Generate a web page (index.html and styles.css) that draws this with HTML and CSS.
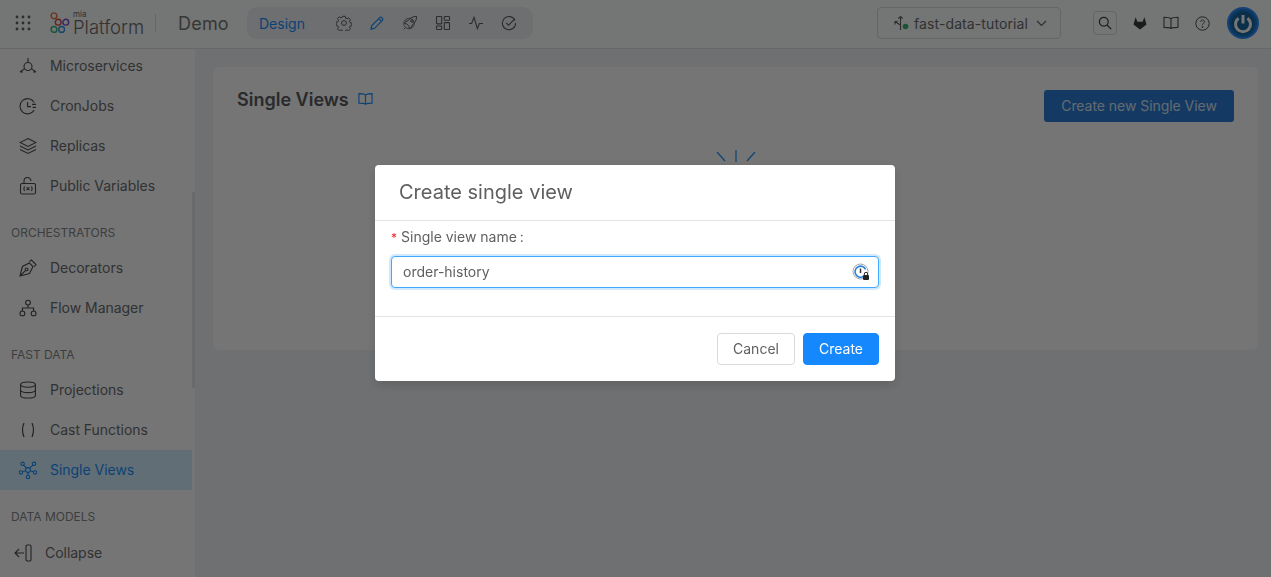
FILE: index.html
```html
<!DOCTYPE html>
<html lang="en">
<head>
    <meta charset="UTF-8">
    <title>Single Views</title>
    <link rel="stylesheet" href="styles.css">
</head>
<body>
    <header class="topbar">
        <svg class="apps" width="16" height="16" viewBox="0 0 16 16" fill="#5f6266">
            <circle cx="2" cy="2" r="1.4"/><circle cx="8" cy="2" r="1.4"/><circle cx="14" cy="2" r="1.4"/>
            <circle cx="2" cy="8" r="1.4"/><circle cx="8" cy="8" r="1.4"/><circle cx="14" cy="8" r="1.4"/>
            <circle cx="2" cy="14" r="1.4"/><circle cx="8" cy="14" r="1.4"/><circle cx="14" cy="14" r="1.4"/>
        </svg>
        <div class="logo">
            <svg width="20" height="22" viewBox="0 0 20 22" fill="none" stroke-width="1.4">
                <circle cx="4" cy="3.8" r="2.9" stroke="#e8743c"/>
                <circle cx="8.2" cy="10.2" r="2.9" stroke="#d84a4a"/>
                <circle cx="15.8" cy="10.2" r="2.9" stroke="#7c50d0"/>
                <circle cx="4" cy="17.4" r="2.9" stroke="#38b874"/>
                <circle cx="11.6" cy="17.4" r="2.9" stroke="#3098ea"/>
            </svg>
            <div class="logo-text"><span class="logo-mia">mia</span><span class="logo-name">Platform</span></div>
        </div>
        <span class="topbar-sep"></span>
        <span class="project">Demo</span>
        <nav class="modes">
            <span class="mode-label">Design</span>
            <span class="modes-sep"></span>
            <svg class="mode-icon" viewBox="0 0 16 16" fill="none" stroke="#5f6266" stroke-width="1"><path d="M6.7 1.3h2.6l.4 1.9 1.3.6 1.7-1 1.8 1.9-1 1.6.5 1.4 1.8.4v2.6l-1.8.4-.5 1.3 1 1.6-1.8 1.8-1.7-1-1.3.6-.4 1.8H6.700l-.4-1.800-1.300-.6-1.700 1-1.800-1.800 1-1.600-.5-1.300-1.800-.4V7.100l1.800-.4.5-1.400-1-1.600 1.800-1.900 1.700 1 1.300-.6z"/><circle cx="8" cy="8" r="2.400"/></svg>
            <svg class="mode-icon" viewBox="0 0 16 16" fill="none" stroke="#1890ff" stroke-width="1.2"><path d="M2 14.200l.8-3.600 8-8c.6-.6 1.500-.6 2 0l.7.7c.5.6.5 1.400 0 2l-8 8z"/><path d="M9.800 3.600l2.700 2.700"/></svg>
            <svg class="mode-icon" viewBox="0 0 16 16" fill="none" stroke="#5f6266" stroke-width="1"><path d="M14.600 1.400c-3.600 0-6.400 1.400-8.400 4.200L3.800 6.400l-1.400 2 2.400.6 2.200 2.200.6 2.400 2-1.400.8-2.400c2.800-2 4.200-4.800 4.200-8.400z"/><circle cx="10" cy="6" r="1.300"/><circle cx="7" cy="8.500" r="5.200" stroke-width=".8"/><path d="M1.600 14.400l1.600-1.600"/></svg>
            <svg class="mode-icon" viewBox="0 0 16 16" fill="none" stroke="#5f6266" stroke-width="1.100"><rect x="1.500" y="1.500" width="5.200" height="7.400" rx=".6"/><rect x="9.300" y="1.500" width="5.200" height="3.800" rx=".6"/><rect x="1.500" y="11" width="5.200" height="3.500" rx=".6"/><rect x="9.300" y="7.600" width="5.200" height="6.900" rx=".6"/></svg>
            <svg class="mode-icon" viewBox="0 0 16 16" fill="none" stroke="#5f6266" stroke-width="1.100"><path d="M1 8.500h2.600L6 2.500l3.400 11 2-5h3.600"/></svg>
            <svg class="mode-icon" viewBox="0 0 16 16" fill="none" stroke="#5f6266" stroke-width="1.100"><path d="M14 5.400A6.600 6.600 0 1 0 14.600 8"/><path d="M5.200 7.800l2.400 2.400 6.200-6.400"/></svg>
        </nav>
        <div class="branch">
            <svg width="16" height="16" viewBox="0 0 16 16" fill="none" stroke="#5f6266" stroke-width="1.100"><path d="M7.500 15V1.500M7.500 1.500L5.300 3.700M7.500 1.500l2.200 2.200M7.500 10L1.800 6.500M1.800 6.500l.2 3M1.800 6.500l3-.3"/><circle cx="12.500" cy="11.500" r="2.800" fill="#38b874" stroke="none"/></svg>
            <span class="branch-name">fast-data-tutorial</span>
            <svg width="11" height="7" viewBox="0 0 11 7" fill="none" stroke="#5f6266" stroke-width="1.100"><path d="M1 1l4.500 4.500L10 1"/></svg>
        </div>
        <div class="tools">
            <span class="search-box">
                <svg width="14" height="14" viewBox="0 0 14 14" fill="none" stroke="#3d3f42" stroke-width="1.200"><circle cx="5.800" cy="5.800" r="4.400"/><path d="M9 9l4.200 4.200"/></svg>
            </span>
            <svg class="tool" width="14" height="14" viewBox="0 0 14 14" fill="#3a3b3d"><path d="M7 13.400L.5 8.600 1 6.800 2.600 1.200l1.800 4.600h5.200l1.800-4.600L13 6.800l.5 1.800z"/></svg>
            <svg class="tool" width="16" height="14" viewBox="0 0 16 14" fill="none" stroke="#4f5154" stroke-width="1.100"><path d="M8 2.600C6.600 1.600 4 1.200 1 1.200v10.200c3 0 5.600.200 7 1.200 1.400-1 4-1.200 7-1.200V1.200c-3 0-5.600.400-7 1.400zM8 2.600v10"/></svg>
            <svg class="tool" width="15" height="15" viewBox="0 0 15 15" fill="none" stroke="#4f5154" stroke-width="1"><circle cx="7.500" cy="7.500" r="6.700"/><path d="M5.600 5.800c0-1.100.9-1.800 1.900-1.800s1.900.7 1.900 1.700c0 1.500-1.900 1.500-1.900 3"/><circle cx="7.500" cy="10.900" r=".5" fill="#4f5154"/></svg>
            <span class="avatar">
                <svg width="32" height="32" viewBox="0 0 32 32" fill="none"><circle cx="16" cy="16" r="15" fill="#1a78c8" stroke="#2f8fff" stroke-width="2"/><circle cx="16" cy="16" r="11.500" fill="#14669f"/><path d="M11.600 11.200a7.500 7.500 0 1 0 8.800 0" stroke="#fff" stroke-width="3"/><path d="M16 8v8.500" stroke="#fff" stroke-width="3"/></svg>
            </span>
        </div>
    </header>

    <div class="content">
        <aside class="sidebar">
            <div class="side-list">
                <div class="side-item">
                    <svg class="side-icon" viewBox="0 0 18 18" fill="none" stroke="#4a4c4f" stroke-width="1.100"><circle cx="9" cy="9.500" r="4"/><path d="M9 1v4.500M5.600 11.600L1 15M12.400 11.600L17 15M1 15h3M14 15h3"/></svg>
                    <span>Microservices</span>
                </div>
                <div class="side-item">
                    <svg class="side-icon" viewBox="0 0 18 18" fill="none" stroke="#4a4c4f" stroke-width="1.100"><path d="M15.200 5.500A7.600 7.600 0 1 0 15.200 13"/><path d="M8.600 5v4.600h3.400M13 7.400h4M13.600 10.400H17"/></svg>
                    <span>CronJobs</span>
                </div>
                <div class="side-item">
                    <svg class="side-icon" viewBox="0 0 18 18" fill="none" stroke="#4a4c4f" stroke-width="1.100"><path d="M9 1.500l8 4-8 4-8-4zM1 9l8 4 8-4M1 12.500l8 4 8-4"/></svg>
                    <span>Replicas</span>
                </div>
                <div class="side-item">
                    <svg class="side-icon" viewBox="0 0 18 18" fill="none" stroke="#4a4c4f" stroke-width="1.100"><rect x="1.500" y="6.500" width="15" height="10.500" rx="1.600"/><path d="M5 6.500V4a3.500 3.500 0 0 1 7 0M5.600 9.500c-.9 1.400-.9 3 0 4.500M12.400 9.500c.9 1.400.9 3 0 4.500M7.600 10.400l2.800 2.800M10.400 10.400l-2.800 2.800"/></svg>
                    <span>Public Variables</span>
                </div>
                <div class="side-title">Orchestrators</div>
                <div class="side-item">
                    <svg class="side-icon" viewBox="0 0 18 18" fill="none" stroke="#4a4c4f" stroke-width="1.100"><path d="M1 17l2.400-9.500 7-3.500 3.600 3.600-3.500 7zM1 17l5.400-5.400M10.400 2.600L12.400 1 17 5.600 15.400 7.600"/><circle cx="7.600" cy="10.400" r="1.400"/></svg>
                    <span>Decorators</span>
                </div>
                <div class="side-item">
                    <svg class="side-icon" viewBox="0 0 18 18" fill="none" stroke="#4a4c4f" stroke-width="1.100"><circle cx="9" cy="3.600" r="2.400"/><circle cx="3.400" cy="14.400" r="2.400"/><circle cx="14.600" cy="14.400" r="2.400"/><path d="M9 6v3M3.400 12V9h11.200v3"/></svg>
                    <span>Flow Manager</span>
                </div>
                <div class="side-title">Fast Data</div>
                <div class="side-item">
                    <svg class="side-icon" viewBox="0 0 18 18" fill="none" stroke="#4a4c4f" stroke-width="1.100"><ellipse cx="9" cy="3.600" rx="7.400" ry="2.600"/><path d="M1.600 3.600v10.800c0 1.400 3.300 2.600 7.400 2.600s7.400-1.200 7.400-2.600V3.600M1.600 9c0 1.400 3.300 2.600 7.400 2.600s7.400-1.200 7.400-2.600"/></svg>
                    <span>Projections</span>
                </div>
                <div class="side-item">
                    <svg class="side-icon" viewBox="0 0 18 18" fill="none" stroke="#4a4c4f" stroke-width="1.200"><path d="M5 2c-1.800 4.200-1.800 9.800 0 14M13 2c1.800 4.200 1.800 9.800 0 14"/></svg>
                    <span>Cast Functions</span>
                </div>
                <div class="side-item side-item-active">
                    <svg class="side-icon" viewBox="0 0 18 18" fill="none" stroke="#1890ff" stroke-width="1.100"><circle cx="9" cy="9" r="2.400"/><circle cx="3.600" cy="2.800" r="1.700"/><circle cx="15" cy="2.800" r="1.700"/><circle cx="1.900" cy="11.400" r="1.700"/><circle cx="16.100" cy="11.400" r="1.700"/><circle cx="9" cy="16" r="1.700"/><path d="M4.700 4.100l2.700 3.100M13.900 4.100l-3.300 3.100M3.500 10.800l3.200-1M14.500 10.800l-3.200-1M9 11.400v2.900"/></svg>
                    <span>Single Views</span>
                </div>
                <div class="side-title">Data Models</div>
            </div>
            <div class="collapse">
                <svg class="collapse-icon" viewBox="0 0 18 18" fill="none" stroke="#4a4c4f" stroke-width="1.100"><path d="M1 9h9M5 5L1 9l4 4"/><rect x="12" y="1" width="5" height="16" rx="1.200"/></svg>
                <span>Collapse</span>
            </div>
            <span class="side-thumb"></span>
        </aside>

        <main class="main">
            <section class="card">
                <div class="card-head">
                    <h1 class="card-title">Single Views</h1>
                    <svg class="card-book" width="15" height="14" viewBox="0 0 16 14" fill="none" stroke="#1890ff" stroke-width="1.200"><path d="M8 2.600C6.600 1.600 4 1.200 1 1.200v10.200c3 0 5.600.200 7 1.200 1.400-1 4-1.200 7-1.200V1.200c-3 0-5.600.400-7 1.400zM8 2.600v10"/></svg>
                    <button type="button" class="btn-new">Create new Single View</button>
                </div>
                <svg class="rays" width="40" height="16" viewBox="0 0 40 16" fill="none" stroke="#1890ff" stroke-width="1.200"><path d="M20 0v12M1 2l8 9M39 2l-8 9"/></svg>
            </section>
        </main>
    </div>

    <div class="mask">
        <div class="modal">
            <div class="modal-title">Create single view</div>
            <div class="modal-body">
                <label class="field-label" for="viewName"><span class="required">*</span>Single view name<span class="colon">:</span></label>
                <div class="input-wrap">
                    <input id="viewName" class="field-input" type="text" value="order-history">
                    <svg class="pw-icon" width="18" height="18" viewBox="0 0 18 18" fill="none">
                        <circle cx="8.500" cy="8.500" r="7.500" stroke="#9aa4ad" stroke-width="1"/>
                        <path d="M13.600 6.500a5.500 5.500 0 1 0-2.400 7" stroke="#2a7fd8" stroke-width="1.600"/>
                        <path d="M8.500 5.500v4.600" stroke="#333" stroke-width="1.500"/>
                        <rect x="11" y="12" width="6" height="5" rx="1" fill="#222"/>
                        <path d="M12.300 12v-1a1.700 1.700 0 0 1 3.400 0v1" stroke="#222" stroke-width="1"/>
                    </svg>
                </div>
            </div>
            <div class="modal-foot">
                <button type="button" class="btn">Cancel</button>
                <button type="button" class="btn btn-primary">Create</button>
            </div>
        </div>
    </div>
</body>
</html>
```

FILE: styles.css
```css
* {
    box-sizing: border-box;
}

html, body {
    height: 100%;
}

body {
    margin: 0;
    font-family: 'Inter', 'Liberation Sans', sans-serif;
    font-size: 14px;
    color: #6b6d70;
    background-color: #f0f3f8;
    overflow: hidden;
    display: flex;
    flex-direction: column;
}

/* top bar */
.topbar {
    height: 49px;
    flex: none;
    display: flex;
    align-items: center;
    background-color: #fdfeff;
    border-bottom: 1px solid #dfe2e6;
    padding: 0 0 2px 15px;
}

.apps {
    flex: none;
}

.logo {
    display: flex;
    align-items: center;
    margin-left: 18px;
    width: 106px;
}

.logo svg {
    margin-left: 1px;
}

.logo-text {
    display: flex;
    flex-direction: column;
    margin-left: 3px;
    color: #6e6e6e;
}

.logo-mia {
    font-size: 8px;
    line-height: 9px;
}

.logo-name {
    font-size: 18.5px;
    line-height: 17px;
    font-weight: 300;
}

.topbar-sep {
    width: 1px;
    height: 18px;
    background-color: #dcdcdc;
}

.project {
    margin-left: 22px;
    width: 69px;
    font-size: 18px;
    letter-spacing: 0.2px;
    color: #787878;
}

.modes {
    width: 286px;
    height: 32px;
    display: flex;
    align-items: center;
    padding-left: 12px;
    background-color: #eef1f5;
    border-radius: 10px;
}

.mode-label {
    width: 46px;
    color: #1890ff;
}

.modes-sep {
    width: 1px;
    height: 16px;
    margin: 0 16px 0 15px;
    background-color: #ccd0d4;
}

.mode-icon {
    width: 16px;
    height: 16px;
    margin-right: 17px;
    flex: none;
}

.branch {
    margin-left: auto;
    width: 184px;
    height: 32px;
    display: flex;
    align-items: center;
    padding: 0 13px 0 15px;
    border: 1px solid #d9dce0;
    border-radius: 4px;
}

.branch-name {
    margin-left: 5px;
    margin-right: auto;
    letter-spacing: 0.1px;
}

.tools {
    display: flex;
    align-items: center;
    margin-left: 32px;
    margin-right: 12px;
}

.search-box {
    width: 24px;
    height: 24px;
    display: flex;
    align-items: center;
    justify-content: center;
    border: 1px solid #d9dce0;
    border-radius: 4px;
}

.tool {
    margin-left: 16px;
    flex: none;
}

.avatar {
    width: 32px;
    height: 32px;
    margin-left: 17px;
}

/* page below the bar */
.content {
    flex: 1;
    display: flex;
    min-height: 0;
}

.sidebar {
    width: 195px;
    flex: none;
    position: relative;
    background-color: #fff;
    overflow: hidden;
    padding-right: 3px;
}

.side-list {
    margin-top: -3px;
}

.side-item {
    height: 40px;
    display: flex;
    align-items: center;
    padding-left: 19px;
}

.side-item span,
.collapse span {
    margin-top: -2px;
    letter-spacing: -0.03px;
}

.side-item-active {
    background-color: #d6f0ff;
    color: #1890ff;
}

.side-icon {
    width: 18px;
    height: 18px;
    margin-right: 13px;
    flex: none;
}

.side-title {
    height: 42px;
    padding: 19px 0 0 11px;
    font-size: 12px;
    line-height: 15px;
    text-transform: uppercase;
    color: #85878a;
}

.collapse {
    position: absolute;
    left: 0;
    right: 3px;
    bottom: 4px;
    height: 40px;
    display: flex;
    align-items: center;
    padding-left: 14px;
    background-color: #fff;
}

.collapse-icon {
    width: 18px;
    height: 18px;
    margin-right: 13px;
}

.side-thumb {
    position: absolute;
    right: 0;
    top: 143px;
    width: 3px;
    height: 196px;
    background-color: #e6e8ec;
}

/* main card */
.main {
    flex: 1;
    padding: 18px 13px 0 18px;
}

.card {
    height: 283px;
    background-color: #fff;
    border-radius: 6px;
    padding: 23px 24px 0;
    display: flex;
    flex-direction: column;
}

.card-head {
    display: flex;
    align-items: flex-start;
}

.card-title {
    margin: 1px 0 0;
    font-size: 18px;
    line-height: 18px;
    font-weight: 600;
    color: #5a5c5f;
}

.card-book {
    margin: 2px 0 0 9px;
}

.btn-new {
    margin-left: auto;
    width: 190px;
    height: 32px;
    padding: 0 0 2px;
    font: inherit;
    letter-spacing: -0.05px;
    color: #d9e6f3;
    background-color: #2d7fd9;
    border: none;
    border-radius: 3px;
}

.rays {
    align-self: center;
    margin-top: 28px;
}

/* modal */
.mask {
    position: fixed;
    top: 0;
    left: 0;
    right: 0;
    bottom: 0;
    display: flex;
    justify-content: center;
    align-items: flex-start;
    padding: 165px 1px 0 0;
    background-color: rgba(0, 0, 0, 0.54);
}

.modal {
    width: 520px;
    height: 216px;
    background-color: #fff;
    border-radius: 4px;
    box-shadow: 0 4px 12px rgba(0, 0, 0, 0.15);
    display: flex;
    flex-direction: column;
}

.modal-title {
    height: 56px;
    padding: 13px 24px 0;
    font-size: 20px;
    line-height: 28px;
    color: #5f5f5f;
    border-bottom: 1px solid #e4e4e4;
}

.modal-body {
    height: 96px;
    padding: 7px 16px 0;
    border-bottom: 1px solid #e4e4e4;
}

.field-label {
    display: block;
    height: 28px;
    line-height: 17px;
    color: #5f5f5f;
}

.required {
    color: #f5222d;
    font-size: 12px;
    margin-right: 4px;
}

.colon {
    margin-left: 3px;
}

.input-wrap {
    position: relative;
}

.field-input {
    width: 100%;
    height: 32px;
    padding: 0 11px 2px;
    font: inherit;
    color: #5f5f5f;
    border: 1px solid #40a9ff;
    border-radius: 4px;
    outline: none;
    box-shadow: 0 0 0 2px rgba(24, 144, 255, 0.2);
}

.pw-icon {
    position: absolute;
    right: 9px;
    top: 7px;
}

.modal-foot {
    flex: 1;
    display: flex;
    justify-content: flex-end;
    align-items: center;
    gap: 8px;
    padding: 0 16px;
}

.btn {
    height: 32px;
    width: 78px;
    padding: 0 0 2px;
    font: inherit;
    color: #5f5f5f;
    background-color: #fff;
    border: 1px solid #d9d9d9;
    border-radius: 4px;
}

.btn-primary {
    width: 76px;
    color: #fff;
    background-color: #1488fc;
    border-color: #1488fc;
}
```
